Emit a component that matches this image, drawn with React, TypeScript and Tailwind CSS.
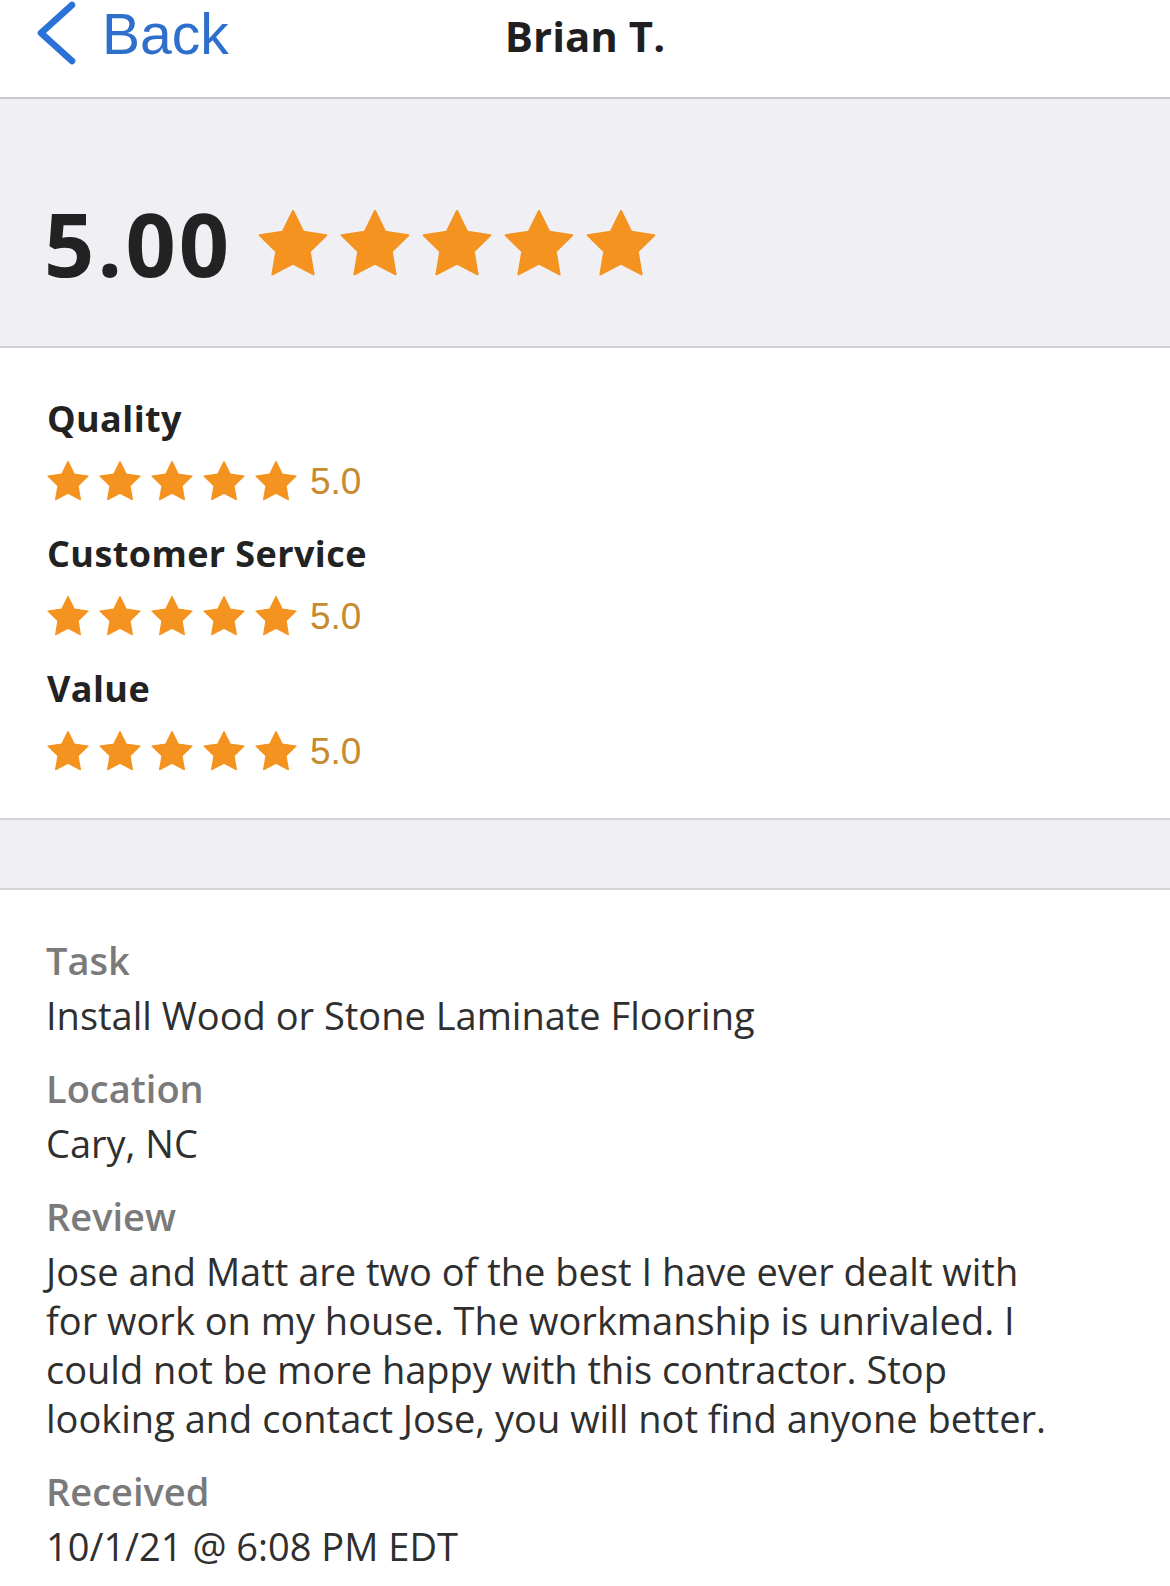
import React from "react";

const STAR_POINTS = Array.from({ length: 10 }, (_, i) => {
    const r = i % 2 === 0 ? 1 : 0.5;
    const a = ((-90 + i * 36) * Math.PI) / 180;
    return `${(r * Math.cos(a)).toFixed(3)},${(r * Math.sin(a)).toFixed(3)}`;
}).join(" ");

function Star({ size }: { size: number }) {
    return (
        <svg
            width={size}
            height={size * 0.97}
            viewBox="-1 -1.03 2 1.94"
            className="shrink-0"
        >
            <polygon
                points={STAR_POINTS}
                fill="#f4931f"
                stroke="#f4931f"
                strokeWidth={0.06}
                strokeLinejoin="round"
            />
        </svg>
    );
}

function RatingRow({ label }: { label: string }) {
    return (
        <div>
            <div className="text-[36px] leading-[35px] font-bold tracking-[0.4px] text-[#222]">{label}</div>
            <div className="mt-6 flex items-center h-[42px]">
                <div className="flex gap-[10px]">
                    {[0, 1, 2, 3, 4].map((i) => (
                        <Star key={i} size={42} />
                    ))}
                </div>
                <span className="ml-[13px] text-[37px] leading-none text-[#c68a2f] [font-family:'Liberation_Sans',Arial,sans-serif]">
                    5.0
                </span>
            </div>
        </div>
    );
}

function Detail({ label, children }: { label: string; children: React.ReactNode }) {
    return (
        <div>
            <div className="text-[38px] leading-[49px] font-semibold text-[#7a7a7a]">{label}</div>
            <div className="mt-[6px] text-[38px] leading-[49px] text-[#2f2f2f]">{children}</div>
        </div>
    );
}

export default function App() {
    return (
        <div className="min-h-screen w-full bg-white [font-family:'Open_Sans',sans-serif]">
            {/* Nav bar */}
            <div className="grid grid-cols-[1fr_auto_1fr] items-start h-[99px] border-b-2 border-[#c9c9cd]">
                <div className="flex items-start pl-[34px]">
                    <svg width={46} height={66} viewBox="34 0 46 66" className="shrink-0">
                        <path
                            d="M72 5 L41 33 L72 61"
                            fill="none"
                            stroke="#2a72d7"
                            strokeWidth={6.5}
                            strokeLinecap="round"
                            strokeLinejoin="round"
                        />
                    </svg>
                    <span className="ml-[22px] mt-[6px] text-[57px] leading-none text-[#2d6fcb] [font-family:'Liberation_Sans',Arial,sans-serif]">
                        Back
                    </span>
                </div>
                <div className="mt-[15px] text-[42px] leading-none font-bold text-[#1f1f1f]">
                    Brian T.
                </div>
                <div />
            </div>

            {/* Overall score */}
            <div className="h-[249px] bg-[#f0f0f4] border-b-2 border-[#d2d2d6] pl-[44px] pt-[100px]">
                <div className="flex items-end">
                    <span className="text-[88px] leading-none font-bold text-[#222] tracking-[3px]">
                        5.00
                    </span>
                    <div className="ml-[26px] mb-[9px] flex gap-[12px]">
                        {[0, 1, 2, 3, 4].map((i) => (
                            <Star key={i} size={70} />
                        ))}
                    </div>
                </div>
            </div>

            {/* Category ratings */}
            <div className="border-b-2 border-[#d4d4d8] pl-[47px] pt-[53px] pb-[46px] flex flex-col gap-[34px]">
                <RatingRow label="Quality" />
                <RatingRow label="Customer Service" />
                <RatingRow label="Value" />
            </div>

            {/* Spacer band */}
            <div className="h-[70px] bg-[#f0f0f4] border-b-2 border-[#d4d4d8]" />

            {/* Review details */}
            <div className="pl-[46px] pt-[46px] pb-[15px] flex flex-col gap-6">
                <Detail label="Task">Install Wood or Stone Laminate Flooring</Detail>
                <Detail label="Location">Cary, NC</Detail>
                <Detail label="Review">
                    <span className="block">Jose and Matt are two of the best I have ever dealt with</span>
                    <span className="block">for work on my house. The workmanship is unrivaled. I</span>
                    <span className="block">could not be more happy with this contractor. Stop</span>
                    <span className="block">looking and contact Jose, you will not find anyone better.</span>
                </Detail>
                <Detail label="Received">10/1/21 @ 6:08 PM EDT</Detail>
            </div>
        </div>
    );
}
